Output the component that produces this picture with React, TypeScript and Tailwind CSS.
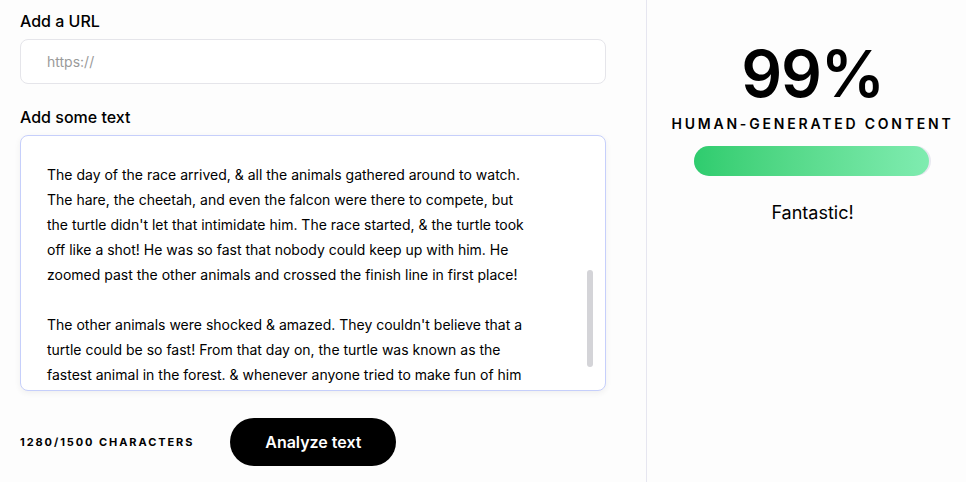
const paragraphs: string[][] = [
  [
    'The day of the race arrived, & all the animals gathered around to watch.',
    'The hare, the cheetah, and even the falcon were there to compete, but',
    "the turtle didn't let that intimidate him. The race started, & the turtle took",
    'off like a shot! He was so fast that nobody could keep up with him. He',
    'zoomed past the other animals and crossed the finish line in first place!',
  ],
  [
    "The other animals were shocked & amazed. They couldn't believe that a",
    'turtle could be so fast! From that day on, the turtle was known as the',
    'fastest animal in the forest. & whenever anyone tried to make fun of him',
  ],
];

export default function App() {
  const score = 99;

  return (
    <div
      className="flex h-[482px] w-[966px] overflow-hidden bg-[#fdfdfd] text-black"
      style={{ fontFamily: 'Inter, "Noto Sans", sans-serif' }}
    >
      {/* Left: input form */}
      <div className="flex w-[647px] shrink-0 flex-col border-r border-[#e6e6f0] pl-5 pr-[40px] pt-[10px]">
        <label className="text-[16px] font-medium leading-[22px]">Add a URL</label>
        <div className="mt-[7px] flex h-[45px] items-center rounded-lg border border-[#e5e5ea] bg-white pl-[26px]">
          <span className="text-[14px] text-[#9a9a9a]">https://</span>
        </div>

        <label className="mt-[22px] text-[16px] font-medium leading-[22px]">Add some text</label>
        <div className="relative mt-[7px] h-[256px] overflow-hidden rounded-lg border border-[#c6cffb] bg-white shadow-[0_2px_6px_rgba(0,0,0,0.06)]">
          <div className="flex flex-col gap-[25px] pl-[26px] pt-[26px]">
            {paragraphs.map((lines, p) => (
              <div key={p} className="flex flex-col">
                {lines.map((line) => (
                  <span key={line} className="whitespace-nowrap text-[14px] leading-[25px]">
                    {line}
                  </span>
                ))}
              </div>
            ))}
          </div>
          {/* scrollbar thumb */}
          <div className="absolute right-[12px] top-[134px] h-[97px] w-[6px] rounded-full bg-[#d4d4d8]" />
        </div>

        <div className="mt-[27px] flex items-center gap-[36px]">
          <span className="text-[11px] font-bold tracking-[0.175em]">1280/1500 CHARACTERS</span>
          <button className="h-[48px] w-[166px] rounded-full bg-black text-[16px] font-semibold text-white">
            Analyze text
          </button>
        </div>
      </div>

      {/* Right: result */}
      <div className="flex flex-1 flex-col items-center pl-[12px] pt-[32px]">
        <div className="text-[64px] font-semibold leading-[84px] tracking-[-0.02em]">{score}%</div>
        <div className="mt-[-3px] whitespace-nowrap text-[14px] font-semibold tracking-[0.2em]">
          HUMAN-GENERATED CONTENT
        </div>
        <div className="mt-[12px] h-[30px] w-[237px] rounded-full bg-[#e8e8f0]">
          <div
            className="h-full rounded-full bg-gradient-to-r from-[#2ecc6e] to-[#7fecb0]"
            style={{ width: `${score}%` }}
          />
        </div>
        <div className="mt-[25px] text-[18px] leading-[24px]">Fantastic!</div>
      </div>
    </div>
  );
}
